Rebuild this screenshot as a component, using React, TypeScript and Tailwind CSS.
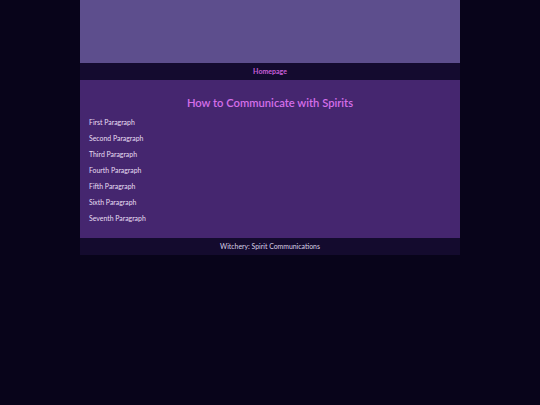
import React from "react";

const paragraphs = [
  "First Paragraph",
  "Second Paragraph",
  "Third Paragraph",
  "Fourth Paragraph",
  "Fifth Paragraph",
  "Sixth Paragraph",
  "Seventh Paragraph",
];

export default function App() {
  return (
    <div className="min-h-[405px] w-full bg-[#08041a] font-['Lato',sans-serif]">
      <div className="mx-auto w-[380px]">
        {/* banner */}
        <div className="h-[63px] bg-[#5d4e8d]" />

        {/* nav */}
        <nav className="flex h-[17px] items-center justify-center bg-[#140b2f]">
          <a className="text-[7px] font-bold text-[#c85fd9]">Homepage</a>
        </nav>

        {/* content */}
        <main className="h-[158px] bg-[#45266f] px-[9px] pt-[15px]">
          <h1 className="mb-[3px] text-center text-[11.2px] font-semibold leading-[16px] text-[#d46ee9]">
            How to Communicate with Spirits
          </h1>
          <div className="flex flex-col">
            {paragraphs.map((p, i) => (
              <p key={i} className="h-4 text-[6.9px] leading-4 text-[#e8def2]">
                {p}
              </p>
            ))}
          </div>
        </main>

        {/* footer */}
        <footer className="flex h-[17px] items-center justify-center bg-[#140b2e]">
          <span className="text-[6.9px] text-[#d9d0e6]">Witchery: Spirit Communications</span>
        </footer>
      </div>
    </div>
  );
}
